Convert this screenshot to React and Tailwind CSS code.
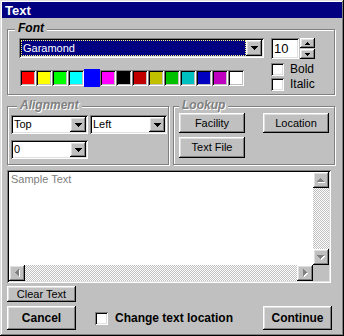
import React from "react";

const raised =
  "shadow-[inset_-1px_-1px_0_#000,inset_1px_1px_0_#fff,inset_-2px_-2px_0_#808080,inset_2px_2px_0_#dfdfdf]";
const sunken =
  "shadow-[inset_1px_1px_0_#808080,inset_-1px_-1px_0_#fff,inset_2px_2px_0_#000,inset_-2px_-2px_0_#dfdfdf]";
const etched =
  "border border-[#808080] shadow-[inset_1px_1px_0_#fff,1px_1px_0_#fff]";

function DownArrow({ color = "#000" }) {
  return (
    <svg width="7" height="4" viewBox="0 0 7 4" className="block">
      <path d="M0 0h7v1H0zM1 1h5v1H1zM2 2h3v1H2zM3 3h1v1H3z" fill={color} />
    </svg>
  );
}
function UpArrow({ color = "#000" }) {
  return (
    <svg width="7" height="4" viewBox="0 0 7 4" className="block">
      <path d="M3 0h1v1H3zM2 1h3v1H2zM1 2h5v1H1zM0 3h7v1H0z" fill={color} />
    </svg>
  );
}
function DisabledArrow({ dir }) {
  const paths = {
    up: "M3 0h1v1H3zM2 1h3v1H2zM1 2h5v1H1zM0 3h7v1H0z",
    down: "M0 0h7v1H0zM1 1h5v1H1zM2 2h3v1H2zM3 3h1v1H3z",
    left: "M3 0h1v7H3zM2 1h1v5H2zM1 2h1v3H1zM0 3h1v1H0z",
    right: "M0 0h1v7H0zM1 1h1v5H1zM2 2h1v3H2zM3 3h1v1H3z",
  };
  const horiz = dir === "up" || dir === "down";
  const w = horiz ? 8 : 5;
  const h = horiz ? 5 : 8;
  return (
    <svg width={w} height={h} viewBox={`0 0 ${w} ${h}`} className="block">
      <path d={paths[dir]} fill="#fff" transform="translate(1 1)" />
      <path d={paths[dir]} fill="#808080" />
    </svg>
  );
}

function Group({ label, className, labelClass, disabled, children }) {
  return (
    <div className={`relative ${etched} ${className}`}>
      <span
        className={`absolute top-[-9px] bg-[#c0c0c0] px-[3px] text-[12px] leading-[14px] font-bold italic ${labelClass} ${
          disabled ? "text-[#808080] [text-shadow:1px_1px_0_#fff]" : "text-black"
        }`}
      >
        {label}
      </span>
      {children}
    </div>
  );
}

function Combo({ className, value, selected }) {
  return (
    <div className={`flex bg-white p-[2px] ${sunken} ${className}`}>
      {selected ? (
        <div className="flex flex-1 items-center border border-dotted border-[#ffff80] bg-[#000080] pl-[1px] text-white">
          {value}
        </div>
      ) : (
        <div className="flex flex-1 items-center pl-[1px]">{value}</div>
      )}
      <div className={`flex w-[16px] items-center justify-center bg-[#c0c0c0] ${raised}`}>
        <DownArrow />
      </div>
    </div>
  );
}

function Button({ className, children }) {
  return (
    <div className={`flex items-center justify-center bg-[#c0c0c0] ${raised} ${className}`}>
      {children}
    </div>
  );
}

function Check({ className = "" }) {
  return <div className={`h-[13px] w-[13px] bg-white ${sunken} ${className}`} />;
}

const swatches = [
  "bg-[#ff0000]",
  "bg-[#ffff00]",
  "bg-[#00ff00]",
  "bg-[#00ffff]",
  "SEL",
  "bg-[#ff00ff]",
  "bg-[#000000]",
  "bg-[#c00000]",
  "bg-[#c0c000]",
  "bg-[#00c000]",
  "bg-[#00c0c0]",
  "bg-[#0000c0]",
  "bg-[#c000c0]",
  "bg-[#ffffff]",
];

export default function App() {
  return (
    <div className="flex h-[336px] w-[344px] flex-col bg-[#c0c0c0] p-[2px] font-['Liberation_Sans',Arial,sans-serif] text-[11px] leading-[13px] text-black shadow-[inset_-1px_-1px_0_#000,inset_1px_1px_0_#dfdfdf,inset_-2px_-2px_0_#808080,inset_2px_2px_0_#fff]">
      <div className="h-[16px] bg-[#000080] pl-[3px] pt-[2px] text-[13px] font-bold leading-[14px] text-white">
        Text
      </div>
      <div className="flex flex-col pl-[5px]">
        {/* Font group */}
        <Group label="Font" labelClass="left-[7px]" className="mt-[11px] h-[66px] w-[328px]">
          <div className="flex pl-[11px] pt-[8px]">
            <div className="flex flex-col">
              <Combo className="h-[20px] w-[245px]" value="Garamond" selected />
              <div className="ml-[1px] mt-[12px] flex">
                {swatches.map((c, i) =>
                  c === "SEL" ? (
                    <div key={i} className="-my-px h-[18px] w-[16px] bg-[#0000ff]" />
                  ) : (
                    <div
                      key={i}
                      className={`h-[16px] w-[16px] ${c} shadow-[inset_1px_1px_0_#808080,inset_-1px_-1px_0_#fff,inset_2px_2px_0_#000,inset_-2px_-2px_0_#c0c0c0]`}
                    />
                  )
                )}
              </div>
            </div>
            <div className="ml-[7px] flex flex-col">
              <div className="flex h-[21px]">
                <div className={`flex w-[28px] items-center bg-white pl-[3px] text-[13px] ${sunken}`}>10</div>
                <div className="ml-[1px] flex w-[15px] flex-col gap-[1px]">
                  <div className={`flex h-[10px] items-center justify-center ${raised}`}>
                    <svg width="5" height="3" viewBox="0 0 5 3" className="block">
                      <path d="M2 0h1v1H2zM1 1h3v1H1zM0 2h5v1H0z" fill="#000" />
                    </svg>
                  </div>
                  <div className={`flex h-[10px] items-center justify-center ${raised}`}>
                    <svg width="5" height="3" viewBox="0 0 5 3" className="block">
                      <path d="M0 0h5v1H0zM1 1h3v1H1zM2 2h1v1H2z" fill="#000" />
                    </svg>
                  </div>
                </div>
              </div>
              <div className="mt-[4px] flex items-center">
                <Check />
                <span className="ml-[6px] text-[12px]">Bold</span>
              </div>
              <div className="mt-[2px] flex items-center">
                <Check />
                <span className="ml-[6px] text-[12px]">Italic</span>
              </div>
            </div>
          </div>
        </Group>

        {/* Alignment / Lookup */}
        <div className="mt-[11px] flex gap-[4px]">
          <Group label="Alignment" labelClass="left-[9px]" disabled className="h-[59px] w-[162px]">
            <div className="flex flex-col pl-[3px] pt-[8px]">
              <div className="flex gap-[2px]">
                <Combo className="h-[19px] w-[77px]" value="Top" />
                <Combo className="h-[19px] w-[77px]" value="Left" />
              </div>
              <Combo className="mt-[6px] h-[19px] w-[77px]" value="0" />
            </div>
          </Group>
          <Group label="Lookup" labelClass="left-[5px]" disabled className="h-[59px] w-[162px]">
            <div className="flex flex-col pl-[5px] pt-[6px]">
              <div className="flex gap-[18px]">
                <Button className="h-[20px] w-[66px]">Facility</Button>
                <Button className="h-[20px] w-[66px]">Location</Button>
              </div>
              <Button className="mt-[4px] h-[21px] w-[66px]">Text File</Button>
            </div>
          </Group>
        </div>

        {/* Text area */}
        <div className={`mt-[5px] flex h-[113px] w-[324px] flex-col bg-white p-[2px] ${sunken}`}>
          <div className="flex flex-1">
            <div className="flex-1 pl-[2px] pt-[1px] text-[#808080]">Sample Text</div>
            <div className="flex w-[16px] flex-col">
              <div className={`flex h-[16px] items-center justify-center bg-[#c0c0c0] ${raised}`}>
                <DisabledArrow dir="up" />
              </div>
              <div className="flex-1 bg-[repeating-conic-gradient(#c0c0c0_0%_25%,#ffffff_0%_50%)] bg-[length:2px_2px]" />
              <div className={`flex h-[16px] items-center justify-center bg-[#c0c0c0] ${raised}`}>
                <DisabledArrow dir="down" />
              </div>
            </div>
          </div>
          <div className="flex h-[16px]">
            <div className={`flex w-[16px] items-center justify-center bg-[#c0c0c0] ${raised}`}>
              <DisabledArrow dir="left" />
            </div>
            <div className="flex-1 bg-[repeating-conic-gradient(#c0c0c0_0%_25%,#ffffff_0%_50%)] bg-[length:2px_2px]" />
            <div className={`flex w-[16px] items-center justify-center bg-[#c0c0c0] ${raised}`}>
              <DisabledArrow dir="right" />
            </div>
            <div className="w-[16px] bg-[#c0c0c0]" />
          </div>
        </div>

        <Button className="mt-[3px] h-[16px] w-[69px]">Clear Text</Button>

        <div className="mt-[4px] flex w-[325px] items-center">
          <Button className="h-[24px] w-[69px] text-[12px] font-bold">Cancel</Button>
          <Check className="ml-[19px]" />
          <span className="ml-[7px] text-[12px] font-bold">Change text location</span>
          <Button className="ml-auto h-[24px] w-[69px] text-[12px] font-bold">Continue</Button>
        </div>
      </div>
    </div>
  );
}
